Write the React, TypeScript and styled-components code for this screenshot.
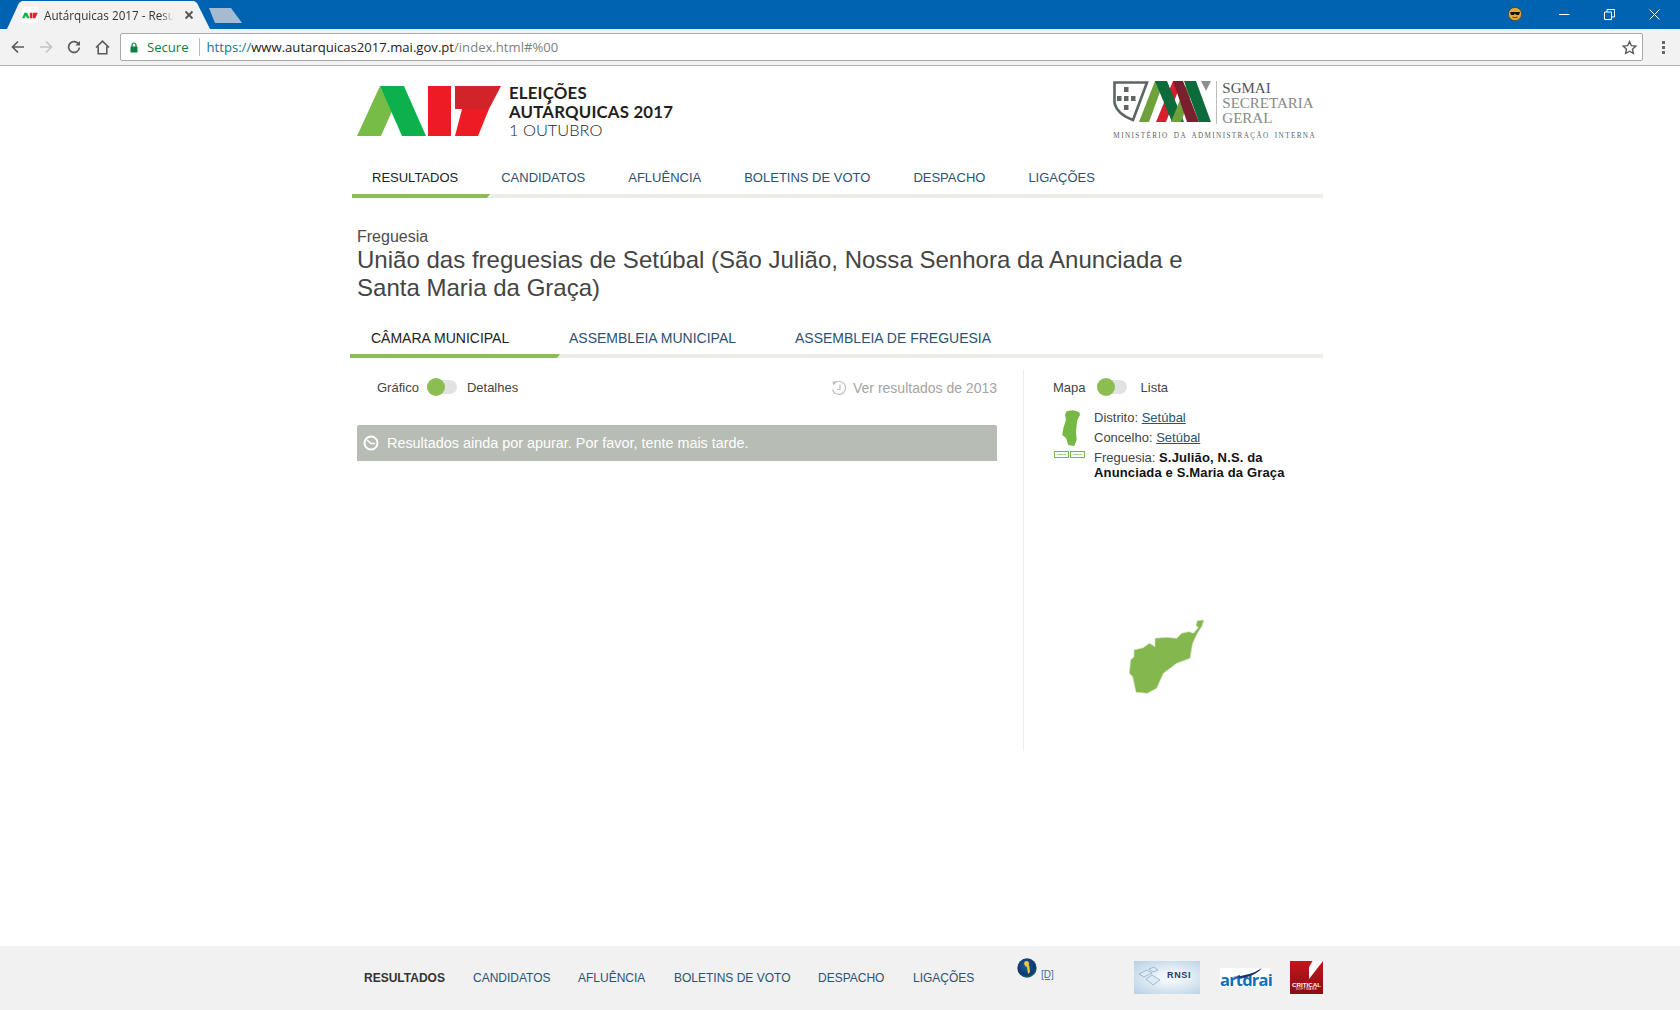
import React from "react";
import styled, { createGlobalStyle } from "styled-components";

const Global = createGlobalStyle`
  html, body { margin: 0; padding: 0; background: #fff; }
  body { font-family: "Liberation Sans", Arial, sans-serif; color: #444; }
  * { box-sizing: border-box; }
`;

const Page = styled.div`
  width: 1680px;
  height: 1010px;
  display: flex;
  flex-direction: column;
  overflow: hidden;
`;

/* browser chrome */
const TabStrip = styled.div`
  height: 29px;
  flex: none;
  background: #0063b1;
  display: flex;
  align-items: flex-end;
  padding-left: 7px;
`;
const Tab = styled.div`
  width: 203px;
  height: 28px;
  background: #f2f2f2;
  clip-path: polygon(0 100%, 12px 2px, 15px 0, 187px 0, 190px 2px, 203px 100%);
  display: flex;
  align-items: center;
  padding: 0 0 0 15px;
  font: 11.7px "Open Sans", "Noto Sans", sans-serif;
  color: #333;
`;
const Favicon = styled.span`
  width: 16px;
  height: 16px;
  background: #fff;
  display: flex;
  align-items: center;
  justify-content: center;
  flex: none;
  margin-right: 6px;
`;
const TabTitle = styled.span`
  width: 130px;
  white-space: nowrap;
  overflow: hidden;
  -webkit-mask-image: linear-gradient(to right, #000 90%, transparent);
  mask-image: linear-gradient(to right, #000 90%, transparent);
`;
const TabClose = styled.svg`
  margin-left: 10px;
  flex: none;
`;
const NewTab = styled.div`
  width: 33px;
  height: 15px;
  margin: 0 0 6px -1px;
  background: #a6bad1;
  clip-path: polygon(0 0, 22px 0, 33px 100%, 6px 100%);
`;
const Spacer = styled.div`
  flex: 1;
`;
const WindowControls = styled.div`
  display: flex;
  align-items: center;
  align-self: flex-start;
  height: 28px;
  padding-right: 3px;
  color: #fff;
`;
const EmojiSlot = styled.span`
  width: 14px;
  height: 14px;
  margin-right: 20px;
  display: flex;
`;
const WinBtn = styled.span`
  width: 45px;
  height: 28px;
  display: flex;
  align-items: center;
  justify-content: center;
`;
const Toolbar = styled.div`
  height: 37px;
  flex: none;
  background: #f2f2f2;
  border-bottom: 1px solid #b5b5b5;
  display: flex;
  align-items: center;
  padding-left: 4px;
`;
const ToolBtn = styled.span`
  width: 28px;
  display: flex;
  align-items: center;
  justify-content: center;
  flex: none;
`;
const Omnibox = styled.div`
  margin: 0 6px 0 4px;
  width: 1523px;
  height: 28px;
  background: #fff;
  border: 1px solid #a9a9a9;
  border-radius: 2px;
  display: flex;
  align-items: center;
  padding: 0 5px 0 9px;
  font: 13.1px "Open Sans", "Noto Sans", sans-serif;
  flex: none;
`;
const Secure = styled.span`
  color: #0b8043;
  margin-left: 9px;
  padding-right: 10px;
  border-right: 1px solid #bbb;
  line-height: 18px;
`;
const Url = styled.span`
  margin-left: 7px;
  flex: 1;
  color: #0b7a83;
  white-space: nowrap;
`;
const UrlHost = styled.span`
  color: #222;
`;
const UrlRest = styled.span`
  color: #808080;
`;

/* site */
const Main = styled.main`
  flex: 1;
  width: 971px;
  margin-left: 352px;
  display: flex;
  flex-direction: column;
`;
const Header = styled.header`
  height: 85px;
  flex: none;
  display: flex;
  align-items: flex-start;
  justify-content: space-between;
  padding: 15px 7px 0 5px;
`;
const Brand = styled.div`
  display: flex;
  align-items: flex-start;
  padding-top: 5px;
`;
const BrandText = styled.div`
  margin-left: 6px;
  font-family: Lato, "Open Sans", sans-serif;
  font-size: 16.8px;
  line-height: 18.5px;
  color: #231f20;
  margin-top: -2px;
`;
const BrandStrong = styled.div`
  font-weight: 700;
  letter-spacing: 0.2px;
`;
const BrandLight = styled.div`
  font-weight: 300;
  font-size: 16.4px;
`;
const Sgmai = styled.div`
  display: flex;
  flex-direction: column;
  align-items: flex-start;
`;
const SgmaiTop = styled.div`
  display: flex;
  align-items: flex-start;
`;
const SgmaiText = styled.div`
  margin-left: 3px;
  font: 15px/15px "Liberation Serif", serif;
  color: #858a88;
  border-left: 1px solid #bbb;
  padding-left: 5px;
  height: 43px;
`;
const SgmaiFirst = styled.div`
  color: #555;
`;
const Ministry = styled.div`
  font: 7.2px "Liberation Serif", serif;
  letter-spacing: 1.38px;
  word-spacing: 2px;
  color: #5d6362;
  margin-top: 8px;
  white-space: nowrap;
`;
const NavBar = styled.nav<{ $top: number; $h: number }>`
  height: ${(p) => p.$h}px;
  padding-top: ${(p) => p.$top}px;
  display: flex;
  align-items: flex-start;
  position: relative;
  flex: none;
  border-bottom: 4px solid #ecefe8;
`;
const SiteLink = styled.a<{ $active?: boolean }>`
  flex: none;
  font-size: 13px;
  line-height: 16px;
  margin-right: 43px;
  white-space: nowrap;
  color: ${(p) => (p.$active ? "#222" : "#2c5272")};
  &:first-of-type {
    margin-left: 20px;
  }
`;
const TabLink = styled.a<{ $active?: boolean; $w: number; $pad: number }>`
  flex: none;
  width: ${(p) => p.$w}px;
  padding-left: ${(p) => p.$pad}px;
  font-size: 14px;
  line-height: 16px;
  white-space: nowrap;
  color: ${(p) => (p.$active ? "#222" : "#2c5272")};
`;
const NavInk = styled.span<{ $w: number; $left: number }>`
  position: absolute;
  left: ${(p) => p.$left}px;
  bottom: -4px;
  height: 4px;
  width: ${(p) => p.$w}px;
  background: #8bbd50;
  clip-path: polygon(0 0, 100% 0, calc(100% - 3px) 100%, 0 100%);
`;
const Place = styled.div`
  padding: 30px 5px 0;
  height: 127px;
  flex: none;
`;
const PlaceKind = styled.div`
  font-size: 16px;
  line-height: 18px;
  color: #4c4c4c;
`;
const PlaceName = styled.h1`
  margin: 0;
  font-weight: 400;
  font-size: 24px;
  line-height: 28px;
  color: #444;
  width: 860px;
  letter-spacing: 0.015px;
`;
const Columns = styled.div`
  display: flex;
  margin-top: 12px;
  align-items: flex-start;
`;
const LeftCol = styled.div`
  width: 640px;
  margin-left: 5px;
  flex: none;
`;
const ControlRow = styled.div`
  display: flex;
  align-items: center;
  justify-content: space-between;
  height: 34px;
  padding-left: 20px;
`;
const ToggleGroup = styled.div`
  display: flex;
  align-items: center;
  font-size: 13px;
  color: #444;
`;
const Switch = styled.span<{ $l: number; $r: number }>`
  width: 30px;
  height: 14px;
  margin: 0 ${(p) => p.$r}px 0 ${(p) => p.$l}px;
  background: #e2e2e2;
  border-radius: 7px;
  position: relative;
  display: inline-block;
  &::before {
    content: "";
    position: absolute;
    left: 0;
    top: -2px;
    width: 18px;
    height: 18px;
    border-radius: 50%;
    background: #8bbd50;
  }
`;
const PastLink = styled.span`
  display: flex;
  align-items: center;
  gap: 6px;
  font-size: 14px;
  color: #a4a4a4;
  padding-top: 1px;
`;
const Alert = styled.div`
  margin-top: 21px;
  height: 36px;
  background: #b7bcb5;
  border-radius: 2px 2px 0 0;
  display: flex;
  align-items: center;
  padding-left: 6px;
  gap: 8px;
  color: #fff;
  font-size: 14.4px;
`;
const RightCol = styled.aside`
  margin-left: 26px;
  width: 300px;
  height: 381px;
  border-left: 1px solid #eceeea;
  padding-left: 30px;
  flex: none;
`;
const MapToggle = styled.div`
  display: flex;
  align-items: center;
  height: 34px;
  margin-left: -1px;
  font-size: 13px;
  color: #444;
`;
const Crumbs = styled.div`
  display: flex;
  margin-top: 5px;
`;
const Mini = styled.div`
  width: 40px;
  flex: none;
  padding-top: 1px;
`;
const CrumbList = styled.div`
  font-size: 13px;
  line-height: 15px;
  color: #444;
`;
const Crumb = styled.div`
  height: 20px;
  padding-top: 1px;
`;
const CrumbLast = styled.div`
  padding-top: 1px;
  width: 200px;
`;
const CrumbLink = styled.a`
  color: #2c5272;
  text-decoration: underline;
`;
const CrumbStrong = styled.b`
  color: #111;
  letter-spacing: 0.15px;
`;
const MapFigure = styled.div`
  margin: 125px 0 0 56px;
`;

/* footer */
const Footer = styled.footer`
  height: 64px;
  flex: none;
  background: #f1f1f1;
  display: flex;
  align-items: flex-start;
  padding-left: 364px;
`;
const FootLink = styled.a<{ $bold?: boolean; $w: number }>`
  width: ${(p) => p.$w}px;
  flex: none;
  margin-top: 25px;
  font-size: 12px;
  line-height: 14px;
  font-weight: ${(p) => (p.$bold ? 700 : 400)};
  color: ${(p) => (p.$bold ? "#333" : "#2c5272")};
  white-space: nowrap;
`;
const Globe = styled.span`
  width: 20px;
  height: 20px;
  margin: 12px 4px 0 0;
  flex: none;
`;
const DocMark = styled.span`
  margin-top: 24px;
  font-size: 10px;
  line-height: 10px;
  color: #3f6ea8;
  text-decoration: underline;
  width: 93px;
  flex: none;
`;
const Rnsi = styled.div`
  margin-top: 15px;
  width: 66px;
  height: 33px;
  flex: none;
  background: radial-gradient(ellipse at 55% 50%, #f1f6fa 20%, #b5d0e4 100%);
  display: flex;
  align-items: center;
  justify-content: flex-end;
  padding: 0 9px 5px 0;
  font: 900 9px "Liberation Sans", sans-serif;
  color: #1d3c6d;
  letter-spacing: 0.6px;
  position: relative;
`;
const RnsiArt = styled.svg`
  position: absolute;
  left: 3px;
  top: 5px;
`;
const Artdrai = styled.div`
  margin: 22px 0 0 20px;
  width: 50px;
  height: 19px;
  background: #fff;
  flex: none;
  font: 700 16.5px/23px "Open Sans", sans-serif;
  color: #1470b8;
  text-align: center;
  letter-spacing: -0.8px;
  position: relative;
`;
const ArtSwoosh = styled.svg`
  position: absolute;
  left: 12px;
  top: 0;
`;
const Critical = styled.div`
  margin: 15px 0 0 20px;
  width: 33px;
  height: 33px;
  flex: none;
  background: linear-gradient(#c4161d, #8a0d12);
  position: relative;
  color: #fff;
  text-align: center;
  font: 700 6.2px/7px "Liberation Sans", sans-serif;
  padding-top: 20px;
  &::before {
    content: "";
    position: absolute;
    right: 0;
    top: 0;
    width: 14px;
    height: 18px;
    background: #fff;
    clip-path: polygon(100% 0, 0 100%, 0 35%, 25% 0);
  }
`;
const CriticalSub = styled.div`
  font-size: 3px;
  line-height: 3px;
  letter-spacing: 0.6px;
  font-weight: 400;
`;

const navItems = ["RESULTADOS", "CANDIDATOS", "AFLUÊNCIA", "BOLETINS DE VOTO", "DESPACHO", "LIGAÇÕES"];

const ALogo = () => (
  <svg width="146" height="50" viewBox="0 0 146 50">
    <polygon points="0,50 23,0 35,25 24,50" fill="#76bc47" />
    <polygon points="23,0 47,0 69,50 45,50" fill="#0db14b" />
    <polygon points="71,0 94,0 94,50 71,50" fill="#ed1c24" />
    <polygon points="98,0 144,0 132,23 98,23" fill="#d2232a" />
    <polygon points="105,23 132,23 121,50 98,50" fill="#ed1c24" />
  </svg>
);

const MaiLogo = () => (
  <svg width="100" height="42" viewBox="0 0 100 42">
    <path d="M1.5 1.5 H34 L20 39 Q4 33 1.5 22 Z" fill="none" stroke="#5b6564" strokeWidth="2.6" />
    <g fill="#5b6564">
      <rect x="11" y="6" width="4.5" height="5" />
      <rect x="4" y="15" width="4.5" height="5" />
      <rect x="11" y="15" width="4.5" height="5" />
      <rect x="18" y="15" width="4.5" height="5" />
      <rect x="11" y="24" width="4.5" height="5" />
    </g>
    <polygon points="26,41 42,0 51,0 36,41" fill="#6ea03c" />
    <polygon points="43,41 60,0 69,0 53,41" fill="#d51f2d" />
    <polygon points="42,0 54,0 71,41 59,41" fill="#0b6b3a" />
    <polygon points="58,41 73,4 78,14 68,41" fill="#6ea03c" />
    <polygon points="60,0 70,0 86,41 74,41" fill="#7a1f2d" />
    <polygon points="71,0 83,0 98,41 86,41" fill="#0b6b3a" />
    <polygon points="88,0 98,0 93,10" fill="#8c9190" />
  </svg>
);

const Portugal = () => (
  <svg width="31" height="48" viewBox="0 0 31 48">
    <polygon
      fill="#75b843"
      points="12.7,1 19.3,0.3 25.3,2.3 26,5 23.3,10 22.7,15 22,21.7 22.7,30 20.3,36 14.3,35 12,28 8.3,25 9.3,18.3 12,10 11,5"
    />
    <rect x="0.5" y="41.5" width="14" height="6" fill="none" stroke="#75b843" />
    <rect x="16.5" y="41.5" width="14" height="6" fill="none" stroke="#75b843" />
    <rect x="3" y="44" width="9" height="1" fill="#a9cf8c" />
    <rect x="19" y="44" width="9" height="1" fill="#a9cf8c" />
  </svg>
);

const Region = () => (
  <svg width="110" height="100" viewBox="0 0 330 300">
    <polygon
      fill="#84b84f"
      stroke="#cfe2b8"
      strokeWidth="2"
      points="282,45 262,47 258,62 265,68 250,85 237,80 215,85 200,100 170,97 135,100 135,125 118,115 100,128 72,135 72,155 62,165 58,205 68,215 78,262 112,265 140,250 160,205 200,175 240,160 248,115 262,85 275,65"
    />
  </svg>
);

export default function App() {
  return (
    <Page>
      <Global />
      <TabStrip>
        <Tab>
          <Favicon>
            <svg width="16" height="7" viewBox="0 0 146 50">
              <polygon points="0,50 23,0 47,0 69,50 45,50 35,25 24,50" fill="#0db14b" />
              <polygon points="71,0 94,0 94,50 71,50" fill="#ed1c24" />
              <polygon points="98,0 144,0 121,50 98,50" fill="#ed1c24" />
            </svg>
          </Favicon>
          <TabTitle>Autárquicas 2017 - Resul</TabTitle>
          <TabClose width="10" height="10" viewBox="0 0 10 10">
            <path d="M1.5 1.5 L8.5 8.5 M8.5 1.5 L1.5 8.5" stroke="#555" strokeWidth="1.8" />
          </TabClose>
        </Tab>
        <NewTab />
        <Spacer />
        <WindowControls>
          <EmojiSlot>
            <svg width="14" height="14" viewBox="0 0 14 14">
              <circle cx="7" cy="7" r="6.6" fill="#e9a92c" stroke="#333" strokeWidth="0.6" />
              <path d="M2 5 H12 L11 8 H8.2 L7 6.4 L5.8 8 H3 Z" fill="#111" />
              <path d="M4.5 10 Q7 11.6 9.5 10" stroke="#5a3a00" fill="none" />
            </svg>
          </EmojiSlot>
          <WinBtn>
            <svg width="11" height="11" viewBox="0 0 11 11">
              <path d="M0 5.5 H10.5" stroke="#fff" />
            </svg>
          </WinBtn>
          <WinBtn>
            <svg width="11" height="11" viewBox="0 0 11 11">
              <path d="M0.5 3 H7.5 V10.5 H0.5 Z M3 3 V0.5 H10.5 V8 H7.5" stroke="#fff" fill="none" />
            </svg>
          </WinBtn>
          <WinBtn>
            <svg width="11" height="11" viewBox="0 0 11 11">
              <path d="M0.5 0.5 L10.5 10.5 M10.5 0.5 L0.5 10.5" stroke="#fff" />
            </svg>
          </WinBtn>
        </WindowControls>
      </TabStrip>
      <Toolbar>
        <ToolBtn>
          <svg width="14" height="14" viewBox="0 0 14 14">
            <path d="M13 7 H2 M7 1.5 L1.5 7 L7 12.5" stroke="#5a5a5a" strokeWidth="1.7" fill="none" />
          </svg>
        </ToolBtn>
        <ToolBtn>
          <svg width="14" height="14" viewBox="0 0 14 14">
            <path d="M1 7 H12 M7 1.5 L12.5 7 L7 12.5" stroke="#c4c4c4" strokeWidth="1.7" fill="none" />
          </svg>
        </ToolBtn>
        <ToolBtn>
          <svg width="14" height="14" viewBox="0 0 14 14">
            <path d="M11.8 4.5 A5.4 5.4 0 1 0 12.4 7.5" stroke="#5a5a5a" strokeWidth="1.7" fill="none" />
            <path d="M8.3 5.6 H13 V1 Z" fill="#5a5a5a" />
          </svg>
        </ToolBtn>
        <ToolBtn>
          <svg width="15" height="15" viewBox="0 0 15 15">
            <path d="M1 7.5 L7.5 1.2 L14 7.5 M3.2 6.5 V13.8 H11.8 V6.5" stroke="#5a5a5a" strokeWidth="1.6" fill="none" />
          </svg>
        </ToolBtn>
        <Omnibox>
          <svg width="8" height="11" viewBox="0 0 8 11">
            <path d="M2 5 V3 A2 2 0 0 1 6 3 V5" stroke="#0b8043" strokeWidth="1.2" fill="none" />
            <rect x="0.5" y="4.5" width="7" height="6" fill="#0b8043" />
          </svg>
          <Secure>Secure</Secure>
          <Url>
            https://<UrlHost>www.autarquicas2017.mai.gov.pt</UrlHost>
            <UrlRest>/index.html#%00</UrlRest>
          </Url>
          <svg width="15" height="15" viewBox="0 0 24 24">
            <path
              d="M12 2.5 L14.9 9 L22 9.8 L16.8 14.6 L18.2 21.6 L12 18 L5.8 21.6 L7.2 14.6 L2 9.8 L9.1 9 Z"
              fill="none"
              stroke="#5a5a5a"
              strokeWidth="2.2"
            />
          </svg>
        </Omnibox>
        <ToolBtn>
          <svg width="3" height="13" viewBox="0 0 3 13">
            <rect width="3" height="3" fill="#666" />
            <rect y="5" width="3" height="3" fill="#666" />
            <rect y="10" width="3" height="3" fill="#666" />
          </svg>
        </ToolBtn>
      </Toolbar>

      <Main>
        <Header>
          <Brand>
            <ALogo />
            <BrandText>
              <BrandStrong>ELEIÇÕES</BrandStrong>
              <BrandStrong>AUTÁRQUICAS 2017</BrandStrong>
              <BrandLight>1 OUTUBRO</BrandLight>
            </BrandText>
          </Brand>
          <Sgmai>
            <SgmaiTop>
              <MaiLogo />
              <SgmaiText>
                <SgmaiFirst>SGMAI</SgmaiFirst>
                <div>SECRETARIA</div>
                <div>GERAL</div>
              </SgmaiText>
            </SgmaiTop>
            <Ministry>MINISTÉRIO DA ADMINISTRAÇÃO INTERNA</Ministry>
          </Sgmai>
        </Header>
        <NavBar $top={19} $h={47}>
          {navItems.map((label, i) => (
            <SiteLink key={label} $active={i === 0}>
              {label}
            </SiteLink>
          ))}
          <NavInk $w={138} $left={0} />
        </NavBar>
        <Place>
          <PlaceKind>Freguesia</PlaceKind>
          <PlaceName>
            União das freguesias de Setúbal (São Julião, Nossa Senhora da Anunciada e Santa Maria da Graça)
          </PlaceName>
        </Place>
        <NavBar $top={5} $h={33}>
          <TabLink $w={210} $pad={19} $active>
            CÂMARA MUNICIPAL
          </TabLink>
          <TabLink $w={233} $pad={7}>
            ASSEMBLEIA MUNICIPAL
          </TabLink>
          <TabLink $w={210} $pad={0}>
            ASSEMBLEIA DE FREGUESIA
          </TabLink>
          <NavInk $w={210} $left={-2} />
        </NavBar>
        <Columns>
          <LeftCol>
            <ControlRow>
              <ToggleGroup>
                Gráfico
                <Switch $l={8} $r={10} />
                Detalhes
              </ToggleGroup>
              <PastLink>
                <svg width="16" height="16" viewBox="0 0 16 16">
                  <path d="M3.2 3.2 A6.6 6.6 0 1 1 1.5 9.5" stroke="#bdbdbd" strokeWidth="1.2" fill="none" />
                  <path d="M1.5 1.5 L5.5 1.8 L2.5 5.5 Z" fill="#bdbdbd" />
                  <path d="M9 4.5 V9.5 H6" stroke="#bdbdbd" strokeWidth="1.2" fill="none" />
                </svg>
                Ver resultados de 2013
              </PastLink>
            </ControlRow>
            <Alert>
              <svg width="16" height="16" viewBox="0 0 16 16">
                <circle cx="8" cy="8" r="6.5" fill="#b7bcb5" stroke="#fff" strokeWidth="2" />
                <path d="M4 5 L8 8.5 H12" stroke="#fff" strokeWidth="1.5" fill="none" />
              </svg>
              Resultados ainda por apurar. Por favor, tente mais tarde.
            </Alert>
          </LeftCol>
          <RightCol>
            <MapToggle>
              Mapa
              <Switch $l={11} $r={14} />
              Lista
            </MapToggle>
            <Crumbs>
              <Mini>
                <Portugal />
              </Mini>
              <CrumbList>
                <Crumb>
                  Distrito: <CrumbLink>Setúbal</CrumbLink>
                </Crumb>
                <Crumb>
                  Concelho: <CrumbLink>Setúbal</CrumbLink>
                </Crumb>
                <CrumbLast>
                  Freguesia: <CrumbStrong>S.Julião, N.S. da Anunciada e S.Maria da Graça</CrumbStrong>
                </CrumbLast>
              </CrumbList>
            </Crumbs>
            <MapFigure>
              <Region />
            </MapFigure>
          </RightCol>
        </Columns>
      </Main>
      <Footer>
        <FootLink $bold $w={109}>RESULTADOS</FootLink>
        <FootLink $w={105}>CANDIDATOS</FootLink>
        <FootLink $w={96}>AFLUÊNCIA</FootLink>
        <FootLink $w={144}>BOLETINS DE VOTO</FootLink>
        <FootLink $w={95}>DESPACHO</FootLink>
        <FootLink $w={104}>LIGAÇÕES</FootLink>
        <Globe>
          <svg width="20" height="20" viewBox="0 0 20 20">
            <defs>
              <radialGradient id="globeFill" cx="45%" cy="40%" r="60%">
                <stop offset="0%" stopColor="#1d5da0" />
                <stop offset="75%" stopColor="#0c3a70" />
                <stop offset="100%" stopColor="#1f5f66" />
              </radialGradient>
            </defs>
            <circle cx="10" cy="10" r="9.7" fill="url(#globeFill)" />
            <circle cx="9.5" cy="5.5" r="2.4" fill="#f3c93a" />
            <path d="M9 6 L12 6.5 L13 14 L11 16 L10 9 L8 8 Z" fill="#f3c93a" />
          </svg>
        </Globe>
        <DocMark>[D]</DocMark>
        <Rnsi>
          <RnsiArt width="24" height="22" viewBox="0 0 24 22">
            <g fill="#dfeaf3" stroke="#7ea6c8" strokeWidth="0.7">
              <polygon points="2,8 10,4 15,7 7,11" />
              <polygon points="9,13 15,9 23,14 16,19" />
              <polygon points="12,3 17,1 21,4 16,6" />
            </g>
          </RnsiArt>
          RNSI
        </Rnsi>
        <Artdrai>
          <ArtSwoosh width="34" height="10" viewBox="0 0 34 10">
            <path d="M0 9 Q18 8 30 0 Q26 6 12 10 Z" fill="#16336e" />
          </ArtSwoosh>
          artdrai
        </Artdrai>
        <Critical>
          CRITICAL
          <CriticalSub>SOFTWARE</CriticalSub>
        </Critical>
      </Footer>
    </Page>
  );
}
